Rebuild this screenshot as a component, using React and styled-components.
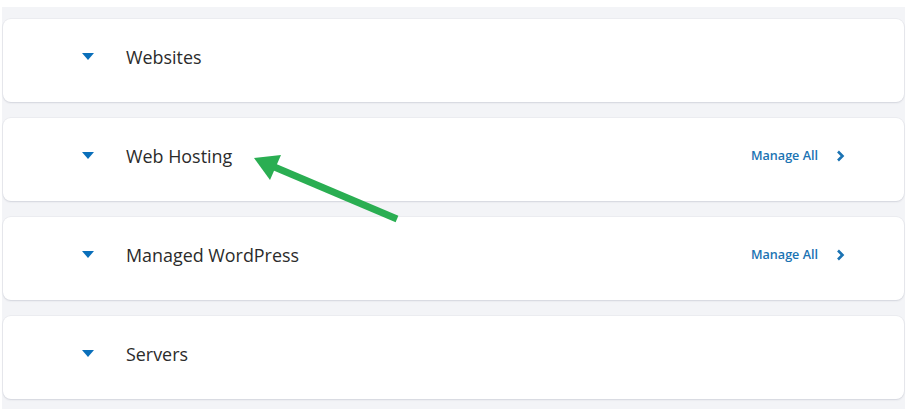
import React from "react";
import styled, { createGlobalStyle } from "styled-components";

const Global = createGlobalStyle`
  html, body { margin: 0; padding: 0; background: #ffffff; }
  body { font-family: "Open Sans", "Liberation Sans", sans-serif; }
`;

const Page = styled.div`
  position: relative;
  width: 914px;
  height: 412px;
  padding: 7px 9px 0 2px;
  box-sizing: border-box;
`;

const Panel = styled.div`
  background: #f3f4f7;
  padding: 12px 1px 10px 1px;
  display: flex;
  flex-direction: column;
  gap: 16px;
`;

const Card = styled.div`
  height: 83px;
  background: #ffffff;
  border-radius: 8px;
  box-shadow: 0 1px 2px rgba(30, 40, 70, 0.12), 0 0 0 1px rgba(30, 40, 70, 0.03);
  display: flex;
  align-items: center;
  padding: 0 59px 8px 79px;
  box-sizing: border-box;
`;

const Caret = styled.span`
  width: 0;
  height: 0;
  border-left: 6px solid transparent;
  border-right: 6px solid transparent;
  border-top: 7px solid #0a6fba;
`;

const Title = styled.span`
  margin-left: 32px;
  font-size: 17.9px;
  color: #2b2b2b;
  flex: 1;
`;

const Manage = styled.a`
  display: flex;
  align-items: center;
  gap: 18px;
  font-size: 12.6px;
  font-weight: 600;
  color: #1b73b3;
  text-decoration: none;
`;

const Arrow = styled.svg`
  position: absolute;
  left: 0;
  top: 0;
  pointer-events: none;
`;

const items = [
  { name: "Websites", manage: false },
  { name: "Web Hosting", manage: true },
  { name: "Managed WordPress", manage: true },
  { name: "Servers", manage: false },
];

export default function App() {
  return (
    <>
      <Global />
      <Page>
        <Panel>
          {items.map((it) => (
            <Card key={it.name}>
              <Caret />
              <Title>{it.name}</Title>
              {it.manage && (
                <Manage>
                  Manage All
                  <svg width="9" height="12" viewBox="0 0 9 12">
                    <path d="M2 1.5 L6.5 6 L2 10.5" fill="none" stroke="#1b73b3" strokeWidth="2.6" strokeLinejoin="miter" />
                  </svg>
                </Manage>
              )}
            </Card>
          ))}
        </Panel>
        <Arrow width="914" height="412" viewBox="0 0 914 412">
          <line x1="397" y1="219" x2="272" y2="166" stroke="#2aae52" strokeWidth="7" />
          <polygon points="254,158 281,155 270,180" fill="#2aae52" />
        </Arrow>
      </Page>
    </>
  );
}
